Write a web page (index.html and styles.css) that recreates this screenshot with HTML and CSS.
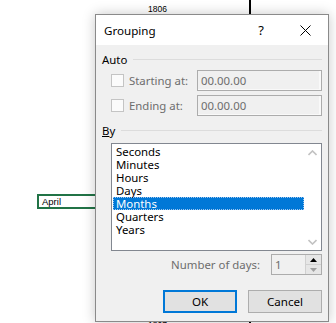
FILE: index.html
```html
<!DOCTYPE html>
<html lang="en">
<head>
  <meta charset="UTF-8">
  <meta name="viewport" content="width=device-width, initial-scale=1.0">
  <title>Grouping</title>
  <link rel="stylesheet" href="styles.css">
</head>
<body>
<div class="sheet">
  <span class="year year-prev">1805</span>
  <span class="year year-top">1806</span>
  <span class="link link-top"></span>
  <div class="cell-april">April</div>
  <span class="link link-bottom"></span>
  <span class="year year-bottom">1807</span>
</div>

<div class="dialog">
  <div class="titlebar">
    <span class="title">Grouping</span>
    <span class="title-btn">?</span>
    <span class="title-btn">
      <svg width="11" height="11" viewBox="0 0 11 11">
        <path d="M0.5 0.5 L10.5 10.5 M10.5 0.5 L0.5 10.5" stroke="#000" stroke-width="1" fill="none"></path>
      </svg>
    </span>
  </div>

  <div class="dialog-body">
    <div class="group-head"><span>Auto</span><span class="rule"></span></div>

    <div class="auto-row">
      <span class="checkbox"></span>
      <span class="auto-label">Starting at:</span>
      <span class="textbox">00.00.00</span>
    </div>
    <div class="auto-row second">
      <span class="checkbox"></span>
      <span class="auto-label">Ending at:</span>
      <span class="textbox">00.00.00</span>
    </div>

    <div class="group-head by-head"><span><u>B</u>y</span><span class="rule"></span></div>

    <div class="listbox">
      <ul class="list-items">
        <li>Seconds</li>
        <li>Minutes</li>
        <li>Hours</li>
        <li>Days</li>
        <li class="selected">Months</li>
        <li>Quarters</li>
        <li>Years</li>
      </ul>
      <div class="scrollbar">
        <span class="scroll-btn">
          <svg width="9" height="6" viewBox="0 0 9 6"><polyline points="0.5 5 4.5 1 8.5 5" fill="none" stroke="#c2c2c2" stroke-width="1.6"></polyline></svg>
        </span>
        <span class="scroll-btn">
          <svg width="9" height="6" viewBox="0 0 9 6"><polyline points="0.5 1 4.5 5 8.5 1" fill="none" stroke="#c2c2c2" stroke-width="1.6"></polyline></svg>
        </span>
      </div>
    </div>

    <div class="days-row">
      <span class="days-label">Number of days:</span>
      <div class="spinner">
        <span class="spin-value">1</span>
        <div class="spin-btns">
          <span class="spin-btn"><svg width="7" height="4" viewBox="0 0 7 4"><polygon points="0 4 3.5 0 7 4" fill="#000"></polygon></svg></span>
          <span class="spin-btn"><svg width="7" height="4" viewBox="0 0 7 4"><polygon points="0 0 3.5 4 7 0" fill="#a0a0a0"></polygon></svg></span>
        </div>
      </div>
    </div>

    <div class="buttons">
      <button class="btn btn-default">OK</button>
      <button class="btn">Cancel</button>
    </div>
  </div>
</div>
</body>
</html>
```

FILE: styles.css
```css
:root {
  --accent: #0078d7;
  --dialog-bg: #f0f0f0;
  --gray-text: #6d6d6d;
  --cell-green: #217346;
}

body {
  margin: 0;
  padding: 0;
  width: 336px;
  height: 323px;
  overflow: hidden;
  background: #fff;
  font-family: "Noto Sans", "Open Sans", sans-serif;
  font-size: 11.4px;
  color: #000;
  position: relative;
}

/* sheet behind the dialog (diagram nodes) */
.sheet {
  position: absolute;
  inset: 0;
}

.year {
  position: absolute;
  left: 148px;
  font-family: "Liberation Sans", sans-serif;
  font-size: 8.5px;
  line-height: 10px;
}

.year-prev { top: -8px; }
.year-top { top: 4px; }
.year-bottom { top: 320px; }

.link {
  position: absolute;
  left: 249px;
  width: 2px;
  background: #000;
}

.link-top { top: 0; height: 20px; }
.link-bottom { top: 300px; height: 23px; }

.cell-april {
  position: absolute;
  left: 37px;
  top: 194px;
  width: 90px;
  height: 15px;
  box-sizing: border-box;
  border: 2px solid var(--cell-green);
  padding-left: 3px;
  font-family: "Liberation Sans", sans-serif;
  font-size: 9.5px;
  line-height: 11px;
  background: #fff;
}

/* dialog window */
.dialog {
  position: absolute;
  left: 95px;
  top: 14px;
  width: 232px;
  border: 1px solid #8a8a8a;
  background: var(--dialog-bg);
  box-shadow: 0 0 12px rgba(0, 0, 0, 0.22);
}

.titlebar {
  display: flex;
  align-items: center;
  height: 30px;
  background: #fff;
}

.title {
  flex-grow: 1;
  padding-left: 8px;
  font-size: 11.6px;
}

.title-btn {
  display: flex;
  align-items: center;
  justify-content: center;
  width: 44px;
  height: 30px;
  font-size: 13px;
}

.title-btn:last-child {
  width: 45px;
}

.dialog-body {
  padding: 6px 6px 8px;
}

.group-head {
  display: flex;
  align-items: center;
  height: 16px;
}

.rule {
  flex-grow: 1;
  margin-left: 6px;
  border-top: 1px solid #dcdcdc;
}

.by-head {
  margin-top: 6px;
}

.auto-row {
  display: flex;
  align-items: center;
  height: 21px;
  margin-top: 3px;
  color: var(--gray-text);
}

.auto-row.second {
  margin-top: 4px;
}

.checkbox {
  width: 13px;
  height: 13px;
  box-sizing: border-box;
  margin-left: 9px;
  border: 1px solid #c4c4c4;
  background: #fbfbfb;
}

.auto-label {
  width: 68px;
  margin-left: 5px;
}

.textbox {
  flex-grow: 1;
  height: 21px;
  box-sizing: border-box;
  border: 1px solid #acacac;
  padding-left: 3px;
  line-height: 19px;
  background: var(--dialog-bg);
  box-shadow: inset -2px -1px 0 #f9f9f9;
}

/* list box */
.listbox {
  display: flex;
  height: 108px;
  box-sizing: border-box;
  margin: 5px 0 0 9px;
  border: 1px solid #828790;
  background: #fff;
}

.list-items {
  flex-grow: 1;
  list-style: none;
  margin: 0;
  padding: 1px 0 0 1px;
}

.list-items li {
  height: 13px;
  line-height: 13px;
  padding-left: 3px;
  box-sizing: border-box;
}

.list-items li.selected {
  background: var(--accent);
  color: #fff;
  outline: 1px dotted #9fc6ef;
  outline-offset: -1px;
}

.scrollbar {
  display: flex;
  flex-direction: column;
  justify-content: space-between;
  width: 17px;
}

.scroll-btn {
  display: flex;
  align-items: center;
  justify-content: center;
  height: 17px;
}

/* number of days */
.days-row {
  display: flex;
  justify-content: flex-end;
  align-items: center;
  margin-top: 3px;
  color: var(--gray-text);
}

.days-label {
  margin-right: 11px;
}

.spinner {
  display: flex;
  width: 51px;
  height: 21px;
  box-sizing: border-box;
  border: 1px solid #acacac;
  background: var(--dialog-bg);
}

.spin-value {
  flex-grow: 1;
  padding-left: 3px;
  line-height: 19px;
}

.spin-btns {
  display: flex;
  flex-direction: column;
  width: 15px;
  border-left: 1px solid #d0d0d0;
}

.spin-btn {
  flex: 1;
  display: flex;
  align-items: center;
  justify-content: center;
  background: #e6e6e6;
  border-bottom: 1px solid #d0d0d0;
}

.spin-btn:last-child {
  border-bottom: none;
}

/* dialog buttons */
.buttons {
  display: flex;
  justify-content: flex-end;
  gap: 11px;
  margin-top: 15px;
}

.btn {
  width: 74px;
  height: 23px;
  box-sizing: border-box;
  border: 1px solid #adadad;
  background: #e1e1e1;
  font-family: inherit;
  font-size: 11.6px;
  color: #000;
  padding: 0;
}

.btn-default {
  border: 2px solid var(--accent);
}
```
